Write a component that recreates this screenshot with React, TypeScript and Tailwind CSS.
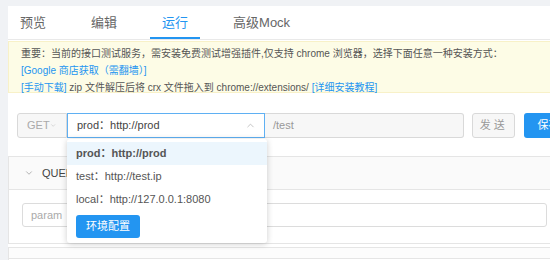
import React from 'react';
import { ChevronDown, ChevronUp } from 'lucide-react';

const tabs = ['预览', '编辑', '运行', '高级Mock'];

const envs = [
  { name: 'prod', url: 'http://prod' },
  { name: 'test', url: 'http://test.ip' },
  { name: 'local', url: 'http://127.0.0.1:8080' }
];

export default function App() {
  return (
    <div className="w-[550px] h-[260px] overflow-hidden bg-[#f0f2f5] pl-2 pt-[6px] font-['Liberation_Sans','Noto_Sans_CJK_SC',sans-serif]">
      <div className="w-[560px] h-full bg-white">
        {/* tabs */}
        <div className="flex gap-[21px] h-[34px] pt-[3px] border-b border-[#e9e9e9]">
          {tabs.map((t) => (
            <div
              key={t}
              className={`px-3 flex items-center text-[13px] ${
                t === '运行' ? 'text-[#2395f1] border-b-2 border-[#2395f1]' : 'text-[#666] border-b-2 border-transparent'
              }`}
            >
              {t}
            </div>
          ))}
        </div>

        {/* alert */}
        <div className="mt-[1px] h-[52px] bg-[#fdfce6] border border-[#f8f1c8] px-3 pt-[3px] text-[10px] leading-[17px] text-[#555]">
          <p>重要：当前的接口测试服务，需安装免费测试增强插件,仅支持 chrome 浏览器，选择下面任意一种安装方式：</p>
          <p className="text-[#2395f1]">[Google 商店获取（需翻墙）]</p>
          <p>
            <span className="text-[#2395f1]">[手动下载]</span> zip 文件解压后将 crx 文件拖入到 chrome://extensions/{' '}
            <span className="text-[#2395f1]">[详细安装教程]</span>
          </p>
        </div>

        {/* url row */}
        <div className="flex items-center mt-[20px] pl-[9px] h-[25px] text-[11px]">
          <div className="w-[50px] h-full flex items-center justify-between pl-[9px] pr-[10px] border border-[#d9d9d9] rounded-l-[3px] bg-[#f7f7f7] text-[#aaa]">
            GET
            <ChevronDown className="w-[11px] h-[11px]" strokeWidth={1.5} />
          </div>
          <div className="relative w-[201px] h-full">
            <div className="h-full flex items-center justify-between pl-[9px] pr-[8px] border border-[#5fb0f3] text-[#444]">
              <span>prod：http://prod</span>
              <ChevronUp className="w-[11px] h-[11px] text-[#aaa]" strokeWidth={1.5} />
            </div>
            <div className="absolute left-0 top-[26px] w-[200px] z-10 bg-white rounded-[3px] shadow-[0_1px_6px_rgba(0,0,0,0.2)] pt-[3px] pb-[5px]">
              {envs.map((e, i) => (
                <div
                  key={e.name}
                  className={`h-[23px] flex items-center pl-[9px] text-[#555] ${
                    i === 0 ? 'bg-[#ecf6fd] font-semibold text-[#444]' : ''
                  }`}
                >
                  {e.name}：{e.url}
                </div>
              ))}
              <button className="ml-[9px] mt-[4px] h-[23px] px-[10px] rounded-[3px] bg-[#2395f1] text-white text-[11px]">
                环境配置
              </button>
            </div>
          </div>
          <div className="w-[202px] h-full flex items-center pl-[8px] border border-l-0 border-[#d9d9d9] rounded-r-[3px] bg-[#f7f7f7] text-[#999]">
            /test
          </div>
          <button className="ml-[8px] w-[44px] h-full border border-[#d9d9d9] rounded-[3px] bg-[#f7f7f7] text-[#999] tracking-[3px]">
            发送
          </button>
          <button className="ml-[9px] w-[44px] h-full rounded-[3px] bg-[#2395f1] text-white text-left pl-[13px]">
            保存
          </button>
        </div>

        {/* query section */}
        <div className="mt-[18px] border border-[#e5e5e5]">
          <div className="h-[33px] flex items-center gap-[8px] pl-[15px] bg-[#fafafa] border-b border-[#e5e5e5] text-[11px] text-[#444]">
            <ChevronDown className="w-[10px] h-[10px] text-[#888]" strokeWidth={1.5} />
            QUERY
          </div>
          <div className="pt-[13px] pb-[16px] pl-[13px] pr-[12px]">
            <div className="w-[525px] h-[24px] flex items-center pl-[8px] border border-[#dcdcdc] rounded-[3px] text-[11px] text-[#aaa]">
              param
            </div>
          </div>
        </div>
        <div className="mt-[3px] h-[12px] border border-[#e5e5e5] bg-[#fcfcfc]" />
        <div className="h-[10px] border-x border-[#e5e5e5]" />
      </div>
    </div>
  );
}
